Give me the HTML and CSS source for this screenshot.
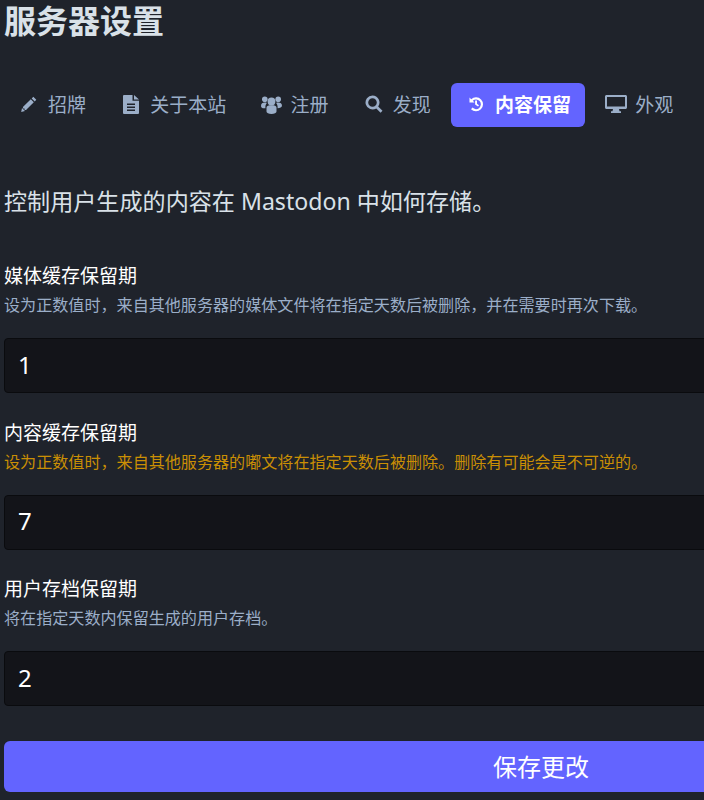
FILE: index.html
```html
<!DOCTYPE html>
<html lang="zh-CN">
<head>
    <meta charset="UTF-8">
    <meta name="viewport" content="width=device-width, initial-scale=1.0">
    <title>服务器设置</title>
    <link rel="stylesheet" href="styles.css">
</head>
<body>
    <div class="content">
        <h1>服务器设置</h1>

        <nav class="tabs">
            <a class="tab" href="#">
                <span class="icon-box"><svg class="icon" viewBox="0 0 16 16"><path d="M12.300.8l3 3-1.600 1.600-3-3zM9.800 3.300l3 3-7.800 7.800-1.400-.2-.1-1.300-1.400-.1-.2-1.400z"/><path d="M1 12l3 3-3.800.9z"/></svg></span>
                招牌
            </a>
            <a class="tab" href="#">
                <span class="icon-box"><svg class="icon icon-doc" viewBox="0 0 16 19"><path fill-rule="evenodd" d="M1 0h8.500v5.800H16V18a1 1 0 0 1-1 1H1a1 1 0 0 1-1-1V1a1 1 0 0 1 1-1zM11 0l5 4.400h-5zM4 8.500v1.500h8V8.500zM4 11.500V13h8v-1.500zM4 14.500V16h8v-1.500z"/></svg></span>
                关于本站
            </a>
            <a class="tab" href="#">
                <span class="icon-box"><svg class="icon icon-group" viewBox="0 0 21 19"><circle cx="10.500" cy="6.500" r="3.900"/><circle cx="3.800" cy="4.200" r="2.800"/><circle cx="17.200" cy="4.200" r="2.800"/><path d="M5.500 16.500v-4c0-1.800 2-2.300 5-2.300s5 .5 5 2.300v4c0 1.500-2.200 2.500-5 2.500s-5-1-5-2.500zM0 11c0-2.700 1.600-3.500 3.800-3.500.9 0 1.600.1 2.100.4-.9 1-1.500 2.300-1.500 3.800v1.500C2.100 13.700 0 13 0 11zM21 11c0-2.700-1.600-3.500-3.800-3.500-.9 0-1.600.1-2.100.4.900 1 1.500 2.300 1.500 3.800v1.500c2.300 0 4.400-.7 4.400-2.700z"/></svg></span>
                注册
            </a>
            <a class="tab" href="#">
                <span class="icon-box"><svg class="icon icon-search" viewBox="0 0 18 18"><path fill-rule="evenodd" d="M7.500.5a7 7 0 0 1 5.700 11l4.300 4.300-1.900 1.900-4.300-4.300A7 7 0 1 1 7.500.5zM7.500 3.200a4.300 4.300 0 1 0 0 8.600 4.300 4.300 0 0 0 0-8.600z"/></svg></span>
                发现
            </a>
            <a class="tab active" href="#">
                <span class="icon-box"><svg class="icon" viewBox="0 0 16 16"><path d="M1.500 1.500l1.700 1.700A7 7 0 1 1 3 13.200l1.500-1.600a4.800 4.800 0 1 0 .3-6.800l1.700 1.700H1.500z"/><path d="M7.100 4.500h1.900v3.200l2 1.500-1 1.400-2.900-2.100z"/></svg></span>
                内容保留
            </a>
            <a class="tab" href="#">
                <span class="icon-box"><svg class="icon icon-screen" viewBox="0 0 22 18"><path fill-rule="evenodd" d="M1.500 0h19c.8 0 1.500.7 1.500 1.500v11c0 .8-.7 1.500-1.500 1.500h-19C.7 14 0 13.300 0 12.500v-11C0 .7.700 0 1.500 0zM2 2v9.500h18V2zM8 14h6l.5 2.300H16V18H6v-1.700h1.500z"/></svg></span>
                外观
            </a>
        </nav>

        <p class="lead">控制用户生成的内容在 Mastodon 中如何存储。</p>

        <div class="field">
            <label>媒体缓存保留期</label>
            <p class="hint">设为正数值时，来自其他服务器的媒体文件将在指定天数后被删除，并在需要时再次下载。</p>
            <input class="input" type="text" value="1">
        </div>
        <div class="field">
            <label>内容缓存保留期</label>
            <p class="hint warning">设为正数值时，来自其他服务器的嘟文将在指定天数后被删除。删除有可能会是不可逆的。</p>
            <input class="input" type="text" value="7">
        </div>
        <div class="field">
            <label>用户存档保留期</label>
            <p class="hint">将在指定天数内保留生成的用户存档。</p>
            <input class="input" type="text" value="2">
        </div>

        <button class="save">保存更改</button>
    </div>
</body>
</html>
```

FILE: styles.css
```css
html, body {
    margin: 0;
    height: 800px;
    overflow: hidden;
    background-color: #1f232b;
}
body {
    font-family: "Noto Sans", "Noto Sans CJK SC", sans-serif;
    color: #d9e1e8;
}
.content {
    width: 1074px;
    padding-left: 4px;
}
h1 {
    margin: 0;
    padding-top: 1px;
    font-size: 32px;
    line-height: 40px;
    font-weight: 700;
    color: #d9e1e8;
}
.tabs {
    display: flex;
    align-items: center;
    gap: 6.25px;
    margin-top: 42px;
}
.tab {
    display: flex;
    align-items: center;
    gap: 7px;
    box-sizing: border-box;
    height: 44px;
    padding: 0 14px 2px 13px;
    border-radius: 6px;
    font-size: 19px;
    color: #9baec8;
    text-decoration: none;
}
.tab.active {
    background-color: #6364ff;
    color: #fff;
    font-weight: 700;
}
.icon-box {
    display: flex;
    justify-content: center;
    align-items: center;
    width: 24px;
}
.icon {
    width: 16px;
    height: 16px;
    fill: currentColor;
}
.icon-doc {
    height: 19px;
}
.icon-group {
    width: 21px;
    height: 19px;
}
.icon-screen {
    width: 22px;
    height: 18px;
}
.icon-search {
    width: 18px;
    height: 18px;
}
.lead {
    margin: 57px 0 0;
    font-size: 23.1px;
    line-height: 34px;
}
.field {
    margin-top: 45px;
}
.field + .field {
    margin-top: 26.5px;
}
label {
    display: block;
    font-size: 19px;
    line-height: 26px;
    color: #fff;
}
.hint {
    margin: 4px 0 0;
    font-size: 16.08px;
    line-height: 24px;
    color: #9baec8;
}
.warning {
    color: #ca8f04;
}
.input {
    display: block;
    box-sizing: border-box;
    width: 100%;
    height: 55px;
    margin-top: 21px;
    padding: 0 13px 3px;
    background-color: #131419;
    border: 1px solid #0a0b0e;
    border-radius: 4px;
    font-family: inherit;
    font-size: 24px;
    color: #fff;
}
.save {
    display: block;
    width: 100%;
    height: 51px;
    margin-top: 35px;
    padding-bottom: 3px;
    background-color: #6364ff;
    border: none;
    border-radius: 6px;
    font-family: inherit;
    font-size: 24px;
    color: #fff;
}
```
